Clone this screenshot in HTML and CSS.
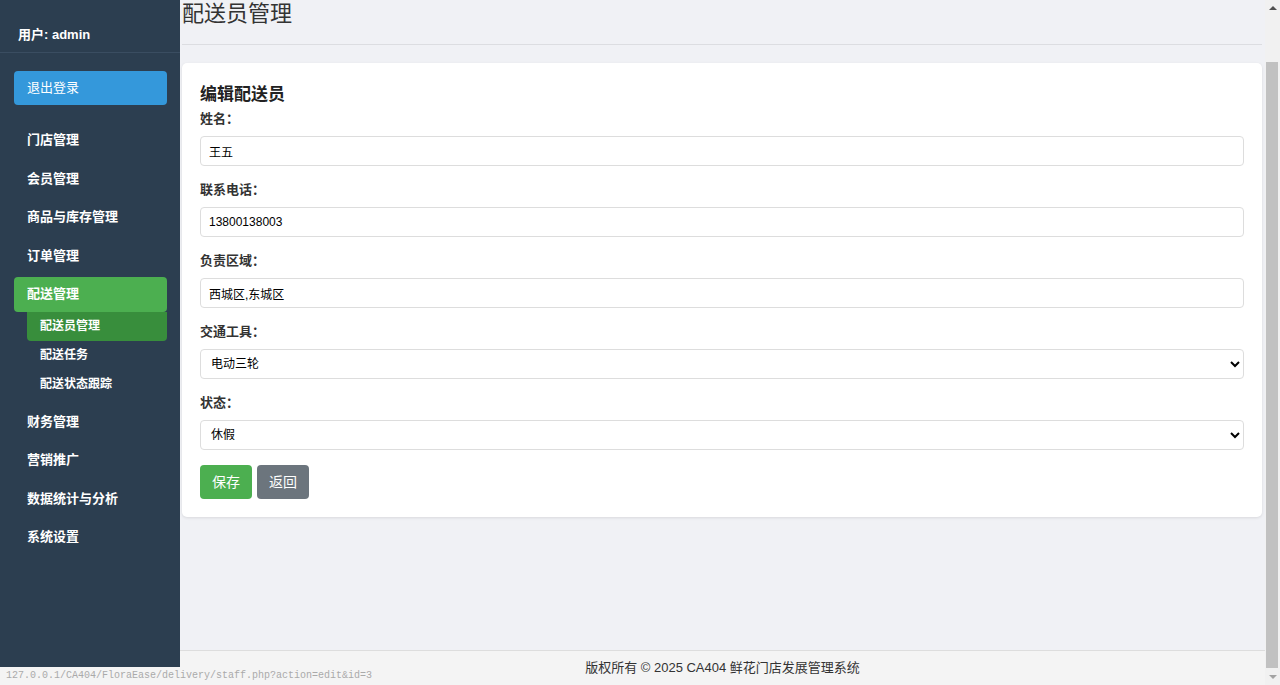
FILE: index.html
```html
<!DOCTYPE html>
<html lang="zh-CN">
<head>
    <meta charset="UTF-8">
    <meta name="viewport" content="width=device-width, initial-scale=1.0">
    <title>配送员管理</title>
    <link rel="stylesheet" href="styles.css">
</head>
<body>
    <!-- sidebar -->
    <div class="sidebar">
        <div class="sidebar-user">用户: admin</div>
        <div class="sidebar-nav">
            <a class="logout-btn" href="#">退出登录</a>
            <a class="menu-item" href="#">门店管理</a>
            <a class="menu-item" href="#">会员管理</a>
            <a class="menu-item" href="#">商品与库存管理</a>
            <a class="menu-item" href="#">订单管理</a>
            <a class="menu-item active" href="#">配送管理</a>
            <div class="submenu">
                <a class="submenu-item active" href="#">配送员管理</a>
                <a class="submenu-item" href="#">配送任务</a>
                <a class="submenu-item" href="#">配送状态跟踪</a>
            </div>
            <a class="menu-item" href="#">财务管理</a>
            <a class="menu-item" href="#">营销推广</a>
            <a class="menu-item" href="#">数据统计与分析</a>
            <a class="menu-item" href="#">系统设置</a>
        </div>
    </div>

    <div class="page">
        <!-- main content -->
        <div class="main">
            <div class="page-header">
                <h1>配送员管理</h1>
            </div>

            <div class="card">
                <h3>编辑配送员</h3>
                <form class="edit-form">
                    <label for="name">姓名：</label>
                    <input id="name" type="text" value="王五">

                    <label for="phone">联系电话：</label>
                    <input id="phone" type="text" value="13800138003">

                    <label for="area">负责区域：</label>
                    <input id="area" type="text" value="西城区,东城区">

                    <label for="vehicle">交通工具：</label>
                    <select id="vehicle">
                        <option>电动车</option>
                        <option selected>电动三轮</option>
                        <option>摩托车</option>
                    </select>

                    <label for="status">状态：</label>
                    <select id="status">
                        <option>在职</option>
                        <option selected>休假</option>
                        <option>离职</option>
                    </select>

                    <div class="form-actions">
                        <button type="button" class="btn btn-save">保存</button>
                        <button type="button" class="btn btn-back">返回</button>
                    </div>
                </form>
            </div>
        </div>

        <div class="footer">版权所有 © 2025 CA404 鲜花门店发展管理系统</div>
    </div>

    <!-- window scrollbar -->
    <div class="scrollbar">
        <div class="scroll-arrow up"></div>
        <div class="scroll-track">
            <div class="scroll-thumb"></div>
        </div>
        <div class="scroll-arrow down"></div>
    </div>

    <!-- browser link preview -->
    <div class="status-url">127.0.0.1/CA404/FloraEase/delivery/staff.php?action=edit&amp;id=3</div>
</body>
</html>
```

FILE: styles.css
```css
body {
    font-family: "Liberation Sans", Arial, "Noto Sans CJK SC", sans-serif;
    margin: 0;
    padding: 0;
    height: 100vh;
    overflow: hidden;
    background-color: #f0f1f5;
    color: #333;
}

a {
    text-decoration: none;
}

/* sidebar */
.sidebar {
    position: fixed;
    left: 0;
    top: 0;
    bottom: 0;
    width: 180px;
    background-color: #2c3e50;
    color: #fff;
}

.sidebar-user {
    padding: 27px 18px 9px;
    font-size: 13px;
    font-weight: bold;
    line-height: 16px;
    border-bottom: 1px solid #3a4d61;
}

.sidebar-nav {
    display: flex;
    flex-direction: column;
    padding: 18px 13px 0 14px;
}

.logout-btn {
    display: block;
    padding: 10px 13px;
    line-height: 14px;
    font-size: 13px;
    color: #fff;
    background-color: #3498db;
    border-radius: 4px;
    margin-bottom: 18px;
}

.menu-item {
    display: block;
    padding: 10px 13px;
    line-height: 14.5px;
    font-size: 13px;
    font-weight: bold;
    color: #fff;
    border-radius: 4px;
    margin-bottom: 4px;
}

.menu-item.active {
    background-color: #4caf50;
    margin-bottom: 0;
}

.submenu {
    display: flex;
    flex-direction: column;
    margin-left: 13px;
    margin-bottom: 6px;
}

.submenu-item {
    display: block;
    padding: 7px 13px;
    line-height: 15px;
    font-size: 12px;
    font-weight: bold;
    color: #fff;
    border-radius: 0 0 4px 4px;
}

.submenu-item.active {
    background-color: #388e3c;
}

/* page column right of the sidebar */
.page {
    margin-left: 180px;
    margin-right: 15px;
    display: flex;
    flex-direction: column;
    height: 100vh;
}

.main {
    flex: 1;
    padding: 0 3px 0 2px;
}

.page-header {
    padding-bottom: 16px;
    border-bottom: 1px solid #dcdde1;
}

.page-header h1 {
    margin: 0;
    font-size: 22px;
    font-weight: normal;
    line-height: 28px;
    color: #333;
}

.card {
    margin-top: 18px;
    padding: 20px 18px 18px;
    background-color: #fff;
    border-radius: 5px;
    box-shadow: 0 1px 3px rgba(0, 0, 0, 0.1);
}

.card h3 {
    margin: 0 0 3px;
    font-size: 17px;
    line-height: 24px;
    font-weight: bold;
    color: #222;
}

.edit-form label {
    display: block;
    font-size: 13px;
    font-weight: bold;
    line-height: 18px;
    margin-bottom: 8px;
    color: #333;
}

.edit-form input,
.edit-form select {
    display: block;
    box-sizing: border-box;
    width: 100%;
    height: 30px;
    margin: 0 0 15px;
    padding: 0 8px;
    font-family: "Liberation Sans", Arial, "Noto Sans CJK SC", sans-serif;
    font-size: 12px;
    color: #000;
    background-color: #fff;
    border: 1px solid #ddd;
    border-radius: 4px;
}

.edit-form select {
    padding: 0 6px;
}

.form-actions {
    display: flex;
    gap: 5px;
}

.btn {
    padding: 8px 12px;
    font-family: "Liberation Sans", Arial, "Noto Sans CJK SC", sans-serif;
    font-size: 14px;
    line-height: 18px;
    color: #fff;
    border: none;
    border-radius: 4px;
    cursor: pointer;
}

.btn-save {
    background-color: #4caf50;
}

.btn-back {
    background-color: #6c757d;
}

/* footer */
.footer {
    height: 34px;
    line-height: 34px;
    text-align: center;
    font-size: 13px;
    color: #333;
    background-color: #f4f4f4;
    border-top: 1px solid #ddd;
}

/* window scrollbar */
.scrollbar {
    position: fixed;
    top: 0;
    right: 0;
    bottom: 0;
    width: 15px;
    display: flex;
    flex-direction: column;
    background-color: #f1f1f1;
}

.scroll-arrow {
    height: 17px;
    display: flex;
    justify-content: center;
    align-items: center;
}

.scroll-arrow::before {
    content: "";
    display: block;
    width: 0;
    height: 0;
    border-left: 4px solid transparent;
    border-right: 4px solid transparent;
}

.scroll-arrow.up::before {
    border-bottom: 4px solid #505050;
    margin-top: -1px;
}

.scroll-arrow.down::before {
    border-top: 4px solid #a3a3a3;
}

.scroll-track {
    flex: 1;
    padding-top: 45px;
    display: flex;
}

.scroll-thumb {
    flex: 1;
    margin: 0 2px 0 1px;
    background-color: #c1c1c1;
}

/* hover url bubble */
.status-url {
    position: fixed;
    left: 0;
    bottom: 0;
    width: 369px;
    height: 18px;
    padding-left: 6px;
    line-height: 18px;
    font-family: "Liberation Mono", monospace;
    font-size: 10px;
    color: #aaa;
    background-color: #f4f4f4;
    border-top-right-radius: 3px;
}
```
